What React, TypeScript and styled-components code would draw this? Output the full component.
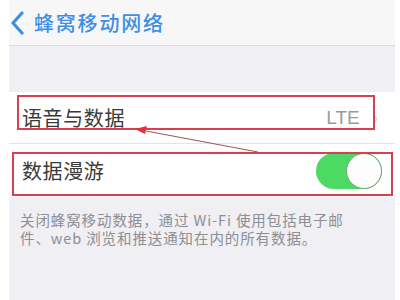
import React from "react";
import styled, { createGlobalStyle } from "styled-components";

const Global = createGlobalStyle`
  html, body { margin: 0; padding: 0; background: #ffffff; }
  body { font-family: "Noto Sans CJK SC", "Noto Sans", sans-serif; }
`;

const Page = styled.div`
  width: 400px;
  height: 300px;
  box-sizing: border-box;
  padding: 0 5px 0 9px;
  background: #ffffff;
  overflow: hidden;
`;

const Screen = styled.div`
  position: relative;
  height: 300px;
  background: #efeff4;
  display: flex;
  flex-direction: column;
`;

const NavBar = styled.div`
  height: 45px;
  background: #f7f7f8;
  border-bottom: 1px solid #dcdce0;
  display: flex;
  align-items: center;
  gap: 8px;
  padding-left: 1px;
  color: #3d8ee6;
  font-size: 20px;
`;

const BackTitle = styled.span`
  letter-spacing: 1.8px;
  line-height: 1;
  font-weight: 500;
`;

const Gap = styled.div`
  height: 46px;
`;

const Group = styled.div`
  background: #ffffff;
  display: flex;
  flex-direction: column;
`;

const Row = styled.div<{ $h: number; $divider?: boolean; $pr: number }>`
  position: relative;
  height: ${(p) => p.$h}px;
  display: flex;
  align-items: center;
  padding: 0 ${(p) => p.$pr}px 0 13px;
  border-bottom: ${(p) => (p.$divider ? "1px solid #e4e4e8" : "none")};
`;

const Label = styled.span`
  flex: 1;
  font-size: 20px;
  color: #3a3a3a;
  letter-spacing: 0.6px;
`;

const Value = styled.span`
  font-family: "Liberation Sans", "Noto Sans", sans-serif;
  font-size: 19px;
  color: #9a9a9e;
  margin-right: 14px;
`;

const Chevron = styled.span`
  color: #c7c7cc;
  font-size: 14px;
  margin-top: -2px;
`;

const Toggle = styled.div`
  width: 66px;
  height: 36px;
  border-radius: 18px;
  background: #4cd964;
  position: relative;
  margin-right: 1px;
`;

const Knob = styled.div`
  position: absolute;
  right: 0;
  top: 0;
  width: 36px;
  height: 36px;
  border-radius: 50%;
  box-sizing: border-box;
  background: #fdfdfd;
  border: 1.5px solid #7e9c88;
`;

const Highlight = styled.div<{ $l: number; $t: number; $w: number; $h: number }>`
  position: absolute;
  left: ${(p) => p.$l}px;
  top: ${(p) => p.$t}px;
  width: ${(p) => p.$w}px;
  height: ${(p) => p.$h}px;
  box-sizing: border-box;
  border: 2px solid #d8404f;
  pointer-events: none;
`;

const Footer = styled.div`
  padding: 14px 24px 0 11px;
  font-size: 14.5px;
  line-height: 18px;
  color: #8e8e93;
  letter-spacing: 0.9px;
`;

const ArrowLayer = styled.svg`
  position: absolute;
  left: 0;
  top: 0;
  pointer-events: none;
`;

export default function App() {
  return (
    <>
      <Global />
      <Page>
        <Screen>
          <NavBar>
            <svg width="16" height="24" viewBox="0 0 16 24">
              <path d="M12 2 L3 12 L12 22" fill="none" stroke="#3d8ee6" strokeWidth="3.2" strokeLinecap="round" strokeLinejoin="round" />
            </svg>
            <BackTitle>蜂窝移动网络</BackTitle>
          </NavBar>
          <Gap />
          <Group>
            <Row $h={51} $divider $pr={17}>
              <Label>语音与数据</Label>
              <Value>LTE</Value>
              <Chevron>›</Chevron>
            </Row>
            <Row $h={53} $pr={12}>
              <Label>数据漫游</Label>
              <Toggle>
                <Knob />
              </Toggle>
            </Row>
          </Group>
          <Footer>
            关闭蜂窝移动数据，通过 Wi-Fi 使用包括电子邮件、web 浏览和推送通知在内的所有数据。
          </Footer>
          <Highlight $l={8} $t={95} $w={358} $h={35} />
          <Highlight $l={3} $t={152} $w={381} $h={44} />
          <ArrowLayer width="386" height="300" viewBox="0 0 386 300">
            <line x1="249" y1="152" x2="137" y2="131" stroke="#9c5a60" strokeWidth="1.2" />
            <polygon points="126,129 138,126 136,134" fill="#e0303f" />
          </ArrowLayer>
        </Screen>
      </Page>
    </>
  );
}
